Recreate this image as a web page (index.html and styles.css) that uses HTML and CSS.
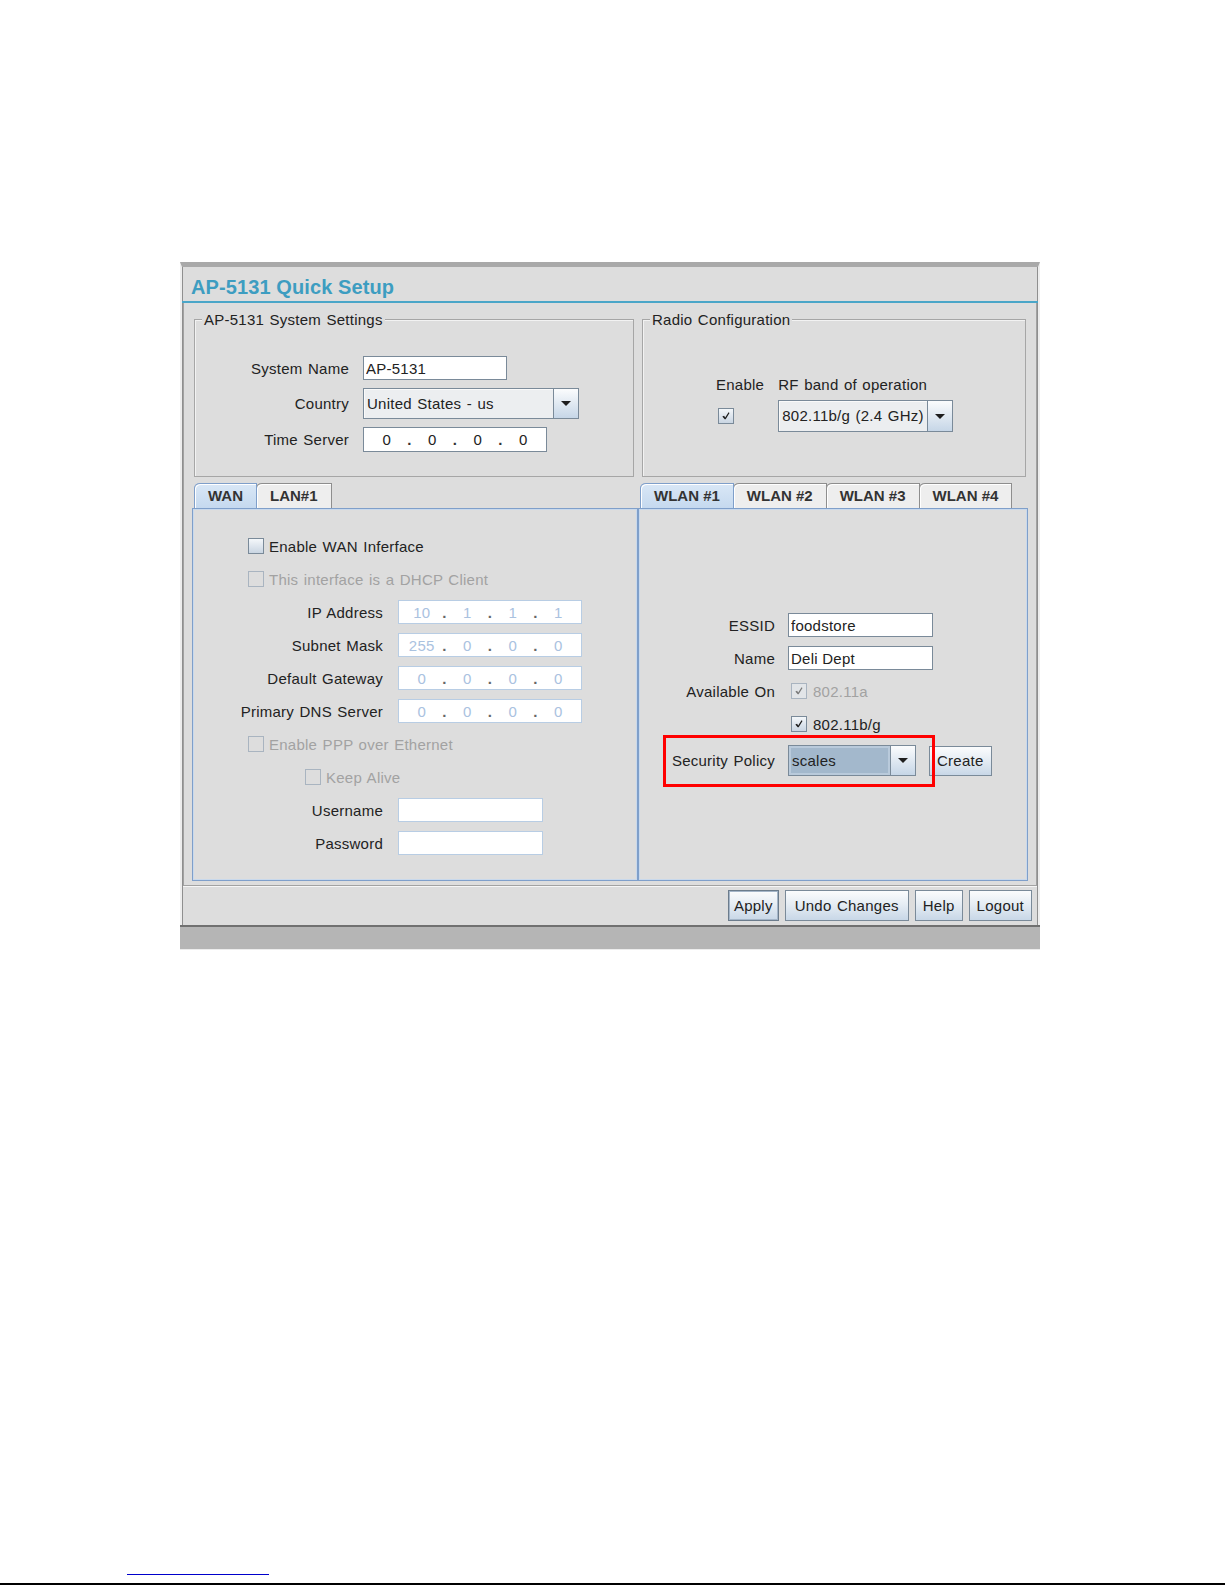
FILE: index.html
```html
<!DOCTYPE html>
<html lang="en">
<head>
  <meta charset="UTF-8" />
  <title>AP-5131 Quick Setup</title>
  <link rel="stylesheet" href="styles.css">
</head>
<body>
  <div class="page">
    <div class="frame">
      <div class="window">
        <div class="title-bar">AP-5131 Quick Setup</div>

        <div class="content">
          <div class="top-row">
            <fieldset class="group sys-group">
              <legend>AP-5131 System Settings</legend>
              <div class="sys-form">
                <label>System Name</label>
                <input class="field name-field" type="text" value="AP-5131">

                <label>Country</label>
                <div class="combo country-combo">
                  <span class="combo-text">United States - us</span>
                  <span class="combo-arrow"><i></i></span>
                </div>

                <label>Time Server</label>
                <div class="ip-field time-field">
                  <span class="oct">0</span><span class="dot">.</span>
                  <span class="oct">0</span><span class="dot">.</span>
                  <span class="oct">0</span><span class="dot">.</span>
                  <span class="oct">0</span>
                </div>
              </div>
            </fieldset>

            <fieldset class="group radio-group">
              <legend>Radio Configuration</legend>
              <div class="radio-form">
                <span>Enable</span>
                <span>RF band of operation</span>
                <span class="check is-checked radio-check">
                  <svg viewBox="0 0 16 16"><path d="M3.8 8.6 L5.8 7.6 L7.1 9.7 L10.9 3.8 L12 4.5 L7.6 11.8 L6.5 11.8 Z" /></svg>
                </span>
                <div class="combo band-combo">
                  <span class="combo-text">802.11b/g (2.4 GHz)</span>
                  <span class="combo-arrow"><i></i></span>
                </div>
              </div>
            </fieldset>
          </div>

          <div class="tabs-row">
            <div class="tab-pane wan-pane">
              <div class="tab-strip">
                <span class="tab is-active">WAN</span>
                <span class="tab">LAN#1</span>
              </div>
              <div class="tab-body wan-body">
                <div class="row check-row">
                  <span class="check"></span>
                  <span>Enable WAN Inferface</span>
                </div>
                <div class="row check-row is-disabled">
                  <span class="check"></span>
                  <span>This interface is a DHCP Client</span>
                </div>
                <div class="row">
                  <span class="row-label">IP Address</span>
                  <div class="ip-field is-disabled">
                    <span class="oct">10</span><span class="dot">.</span>
                    <span class="oct">1</span><span class="dot">.</span>
                    <span class="oct">1</span><span class="dot">.</span>
                    <span class="oct">1</span>
                  </div>
                </div>
                <div class="row">
                  <span class="row-label">Subnet Mask</span>
                  <div class="ip-field is-disabled">
                    <span class="oct">255</span><span class="dot">.</span>
                    <span class="oct">0</span><span class="dot">.</span>
                    <span class="oct">0</span><span class="dot">.</span>
                    <span class="oct">0</span>
                  </div>
                </div>
                <div class="row">
                  <span class="row-label">Default Gateway</span>
                  <div class="ip-field is-disabled">
                    <span class="oct">0</span><span class="dot">.</span>
                    <span class="oct">0</span><span class="dot">.</span>
                    <span class="oct">0</span><span class="dot">.</span>
                    <span class="oct">0</span>
                  </div>
                </div>
                <div class="row">
                  <span class="row-label">Primary DNS Server</span>
                  <div class="ip-field is-disabled">
                    <span class="oct">0</span><span class="dot">.</span>
                    <span class="oct">0</span><span class="dot">.</span>
                    <span class="oct">0</span><span class="dot">.</span>
                    <span class="oct">0</span>
                  </div>
                </div>
                <div class="row check-row is-disabled">
                  <span class="check"></span>
                  <span>Enable PPP over Ethernet</span>
                </div>
                <div class="row check-row keep-row is-disabled">
                  <span class="check"></span>
                  <span>Keep Alive</span>
                </div>
                <div class="row">
                  <span class="row-label">Username</span>
                  <input class="field short-field is-disabled" type="text" value="">
                </div>
                <div class="row">
                  <span class="row-label">Password</span>
                  <input class="field short-field is-disabled" type="password" value="">
                </div>
              </div>
            </div>

            <div class="tab-pane wlan-pane">
              <div class="tab-strip">
                <span class="tab is-active">WLAN #1</span>
                <span class="tab">WLAN #2</span>
                <span class="tab">WLAN #3</span>
                <span class="tab">WLAN #4</span>
              </div>
              <div class="tab-body wlan-body">
                <div class="row">
                  <span class="row-label">ESSID</span>
                  <input class="field short-field" type="text" value="foodstore">
                </div>
                <div class="row">
                  <span class="row-label">Name</span>
                  <input class="field short-field" type="text" value="Deli Dept">
                </div>
                <div class="row">
                  <span class="row-label">Available On</span>
                  <span class="check is-checked is-disabled">
                    <svg viewBox="0 0 16 16"><path d="M3.8 8.6 L5.8 7.6 L7.1 9.7 L10.9 3.8 L12 4.5 L7.6 11.8 L6.5 11.8 Z" /></svg>
                  </span>
                  <span class="muted">802.11a</span>
                </div>
                <div class="row">
                  <span class="row-label"></span>
                  <span class="check is-checked">
                    <svg viewBox="0 0 16 16"><path d="M3.8 8.6 L5.8 7.6 L7.1 9.7 L10.9 3.8 L12 4.5 L7.6 11.8 L6.5 11.8 Z" /></svg>
                  </span>
                  <span>802.11b/g</span>
                </div>
                <div class="row policy-row">
                  <span class="row-label">Security Policy</span>
                  <div class="combo policy-combo is-focus">
                    <span class="combo-text">scales</span>
                    <span class="combo-arrow"><i></i></span>
                  </div>
                  <button class="btn create-btn">Create</button>
                  <div class="callout"></div>
                </div>
              </div>
            </div>
          </div>
        </div>

        <div class="button-bar">
          <button class="btn btn-apply">Apply</button>
          <button class="btn btn-undo">Undo Changes</button>
          <button class="btn">Help</button>
          <button class="btn">Logout</button>
        </div>
      </div>
      <div class="status-bar"></div>
    </div>

    <div class="doc-foot">
      <div class="foot-link"></div>
      <div class="foot-rule"></div>
    </div>
  </div>
</body>
</html>
```

FILE: styles.css
```css
body {
  margin: 0;
  background: #ffffff;
  font-family: "Liberation Sans", Arial, sans-serif;
  font-size: 15px;
  line-height: 17px;
  letter-spacing: 0.25px;
  word-spacing: 1px;
  color: #222222;
}

.page {
  min-height: 1585px;
  box-sizing: border-box;
  padding-top: 262px;
  display: flex;
  flex-direction: column;
}

.frame {
  width: 860px;
  margin-left: 180px;
}

.window {
  background: #dddddd;
  border-top: 5px solid #a9a9a9;
  border-left: 2px solid #eeeeee;
  border-right: 2px solid #eeeeee;
  box-shadow: inset 1px 0 0 #8f8f8f, inset -1px 0 0 #8f8f8f;
}

.title-bar {
  height: 36px;
  box-sizing: border-box;
  padding: 9px 0 0 9px;
  font-size: 20px;
  line-height: 23px;
  font-weight: bold;
  letter-spacing: 0.1px;
  word-spacing: 0;
  color: #3d9dc1;
  border-bottom: 2px solid #4aa6c8;
}

.content {
  margin: 0 1px;
  border: 1px solid #a2a2a2;
  border-top: 0;
  box-shadow: 0 1px 0 #f6f6f6;
}

/* top fieldsets */
.top-row {
  display: flex;
  gap: 8px;
  padding: 8px 10px 0 10px;
}

.group {
  margin: 0;
  padding: 28px 0 24px;
  border: 1px solid #a6a6a6;
  box-shadow: inset 1px 1px 0 #f2f2f2;
  min-width: 0;
}

.group legend {
  margin-left: 7px;
  padding: 0 2px;
  background: #dddddd;
}

.sys-group {
  width: 440px;
  box-sizing: border-box;
}

.radio-group {
  flex: 1;
}

.sys-form {
  display: grid;
  grid-template-columns: 154px auto;
  column-gap: 14px;
  row-gap: 8px;
  align-items: center;
  justify-items: start;
}

.sys-form label {
  justify-self: end;
}

.radio-form {
  display: grid;
  grid-template-columns: auto auto;
  column-gap: 14px;
  row-gap: 7px;
  align-items: center;
  justify-content: start;
  justify-items: start;
  margin: 20px 0 0 73px;
}

.radio-check {
  margin-left: 2px;
}

/* text fields */
.field {
  height: 24px;
  box-sizing: border-box;
  margin: 0;
  padding: 0 2px;
  border: 1px solid #7a8a99;
  background: #ffffff;
  font: inherit;
  letter-spacing: inherit;
  color: #222222;
  outline: none;
}

.field.is-disabled {
  border-color: #b8cde4;
}

.name-field {
  width: 144px;
}

.short-field {
  width: 145px;
}

.ip-field {
  display: flex;
  align-items: center;
  width: 184px;
  height: 24px;
  box-sizing: border-box;
  border: 1px solid #7a8a99;
  background: #ffffff;
}

.time-field {
  height: 25px;
}

.ip-field .oct {
  flex: 1;
  text-align: center;
}

.ip-field .dot {
  width: 0;
  display: flex;
  justify-content: center;
  font-weight: bold;
  color: #333333;
}

.ip-field.is-disabled {
  border-color: #b8cde4;
  color: #aac2df;
}

.ip-field.is-disabled .dot {
  color: #666666;
}

/* combo boxes */
.combo {
  display: flex;
  height: 31px;
  box-sizing: border-box;
  border: 1px solid #7a8a99;
  background: #eceef0;
}

.combo-text {
  flex: 1;
  padding-left: 3px;
  line-height: 29px;
  box-shadow: inset 1px 1px 0 #fafafa;
  white-space: nowrap;
}

.combo-arrow {
  width: 24px;
  flex: none;
  border-left: 1px solid #7a8a99;
  background: linear-gradient(#fbfcfd, #c6d6e7);
  display: flex;
  align-items: center;
  justify-content: center;
}

.combo-arrow i {
  width: 0;
  height: 0;
  border-left: 5px solid transparent;
  border-right: 5px solid transparent;
  border-top: 5px solid #1e1e1e;
}

.country-combo {
  width: 216px;
}

.band-combo {
  width: 175px;
  height: 32px;
}

.band-combo .combo-text {
  line-height: 30px;
}

.policy-combo {
  width: 128px;
}

.combo.is-focus .combo-text {
  background: #a3b8cc;
  box-shadow: inset 0 0 0 2px #b9cadb;
}

/* checkboxes */
.check {
  width: 16px;
  height: 16px;
  flex: none;
  box-sizing: border-box;
  border: 1px solid #7a8a99;
  background: linear-gradient(#f4f7fa, #c9d5e2);
  display: inline-flex;
}

.check svg {
  width: 14px;
  height: 14px;
}

.check path {
  fill: #1e1e1e;
}

.check.is-disabled {
  border-color: #a9b4c0;
  background: #e2e5e8;
}

.check.is-disabled path {
  fill: #7a7a7a;
}

.is-disabled .check {
  border-color: #a9b4c0;
  background: transparent;
}

.muted,
.row.is-disabled {
  color: #a2a2a2;
}

/* tabbed panes */
.tabs-row {
  display: flex;
  padding: 6px 8px 4px 8px;
}

.wan-pane {
  width: 446px;
  flex: none;
}

.wlan-pane {
  flex: 1;
}

.tab-strip {
  display: flex;
  height: 25px;
  padding-left: 2px;
}

.tab {
  height: 25px;
  box-sizing: border-box;
  padding: 0 13px;
  line-height: 24px;
  font-weight: bold;
  letter-spacing: 0;
  word-spacing: 0;
  color: #333333;
  background: #eeeeee;
  border: 1px solid #8e8e8e;
  border-bottom: 0;
  border-top-left-radius: 6px 5px;
  margin-right: -1px;
  box-shadow: inset 1px 1px 0 #ffffff;
}

.tab.is-active {
  background: linear-gradient(#d9e7f6, #c5d9ef);
  border-color: #7f9fca;
  position: relative;
}

.tab-body {
  height: 373px;
  box-sizing: border-box;
  border: 1px solid #7f9fca;
  box-shadow: inset 0 0 0 1px #c9d9ec;
}

.wan-body {
  padding-top: 25px;
}

.wlan-body {
  padding-top: 104px;
}

.row {
  display: flex;
  align-items: center;
  height: 24px;
  margin-bottom: 9px;
}

.row .check {
  margin-right: 5px;
}

.row-label {
  width: 190px;
  flex: none;
  margin-right: 15px;
  text-align: right;
}

.wlan-body .row-label {
  width: 136px;
  margin-right: 13px;
}

.wlan-body .check {
  margin-left: 3px;
  margin-right: 6px;
}

.check-row {
  padding-left: 55px;
}

.keep-row {
  padding-left: 112px;
}

.policy-row {
  height: 31px;
  position: relative;
}

.callout {
  position: absolute;
  left: 24px;
  top: -10px;
  width: 272px;
  height: 52px;
  box-sizing: border-box;
  border: 3px solid #ff0000;
}

/* buttons */
.btn {
  height: 31px;
  margin: 0;
  padding: 0 7px;
  border: 1px solid #7a8a99;
  border-radius: 0;
  background: linear-gradient(#fbfcfd 0%, #e6edf4 45%, #c8d7e7 100%);
  font: inherit;
  letter-spacing: inherit;
  word-spacing: inherit;
  color: #222222;
  cursor: pointer;
}

.create-btn {
  height: 30px;
  margin-left: 13px;
}

.btn-apply {
  padding: 0 5px;
  border-color: #6c7c8c;
  box-shadow: inset 0 0 0 1px #a4b5c8;
}

.btn-undo {
  padding: 0 9px;
}

.button-bar {
  display: flex;
  justify-content: flex-end;
  gap: 6px;
  padding: 4px 6px 4px 0;
}

.status-bar {
  height: 22px;
  border-top: 2px solid #707070;
  border-bottom: 1px solid #ececec;
  background: #b5b5b5;
}

/* page footer lines */
.doc-foot {
  margin-top: auto;
}

.foot-link {
  width: 142px;
  height: 1px;
  margin-left: 127px;
  background: #0000cc;
}

.foot-rule {
  height: 2px;
  margin-top: 8px;
  background: #000000;
}
```
